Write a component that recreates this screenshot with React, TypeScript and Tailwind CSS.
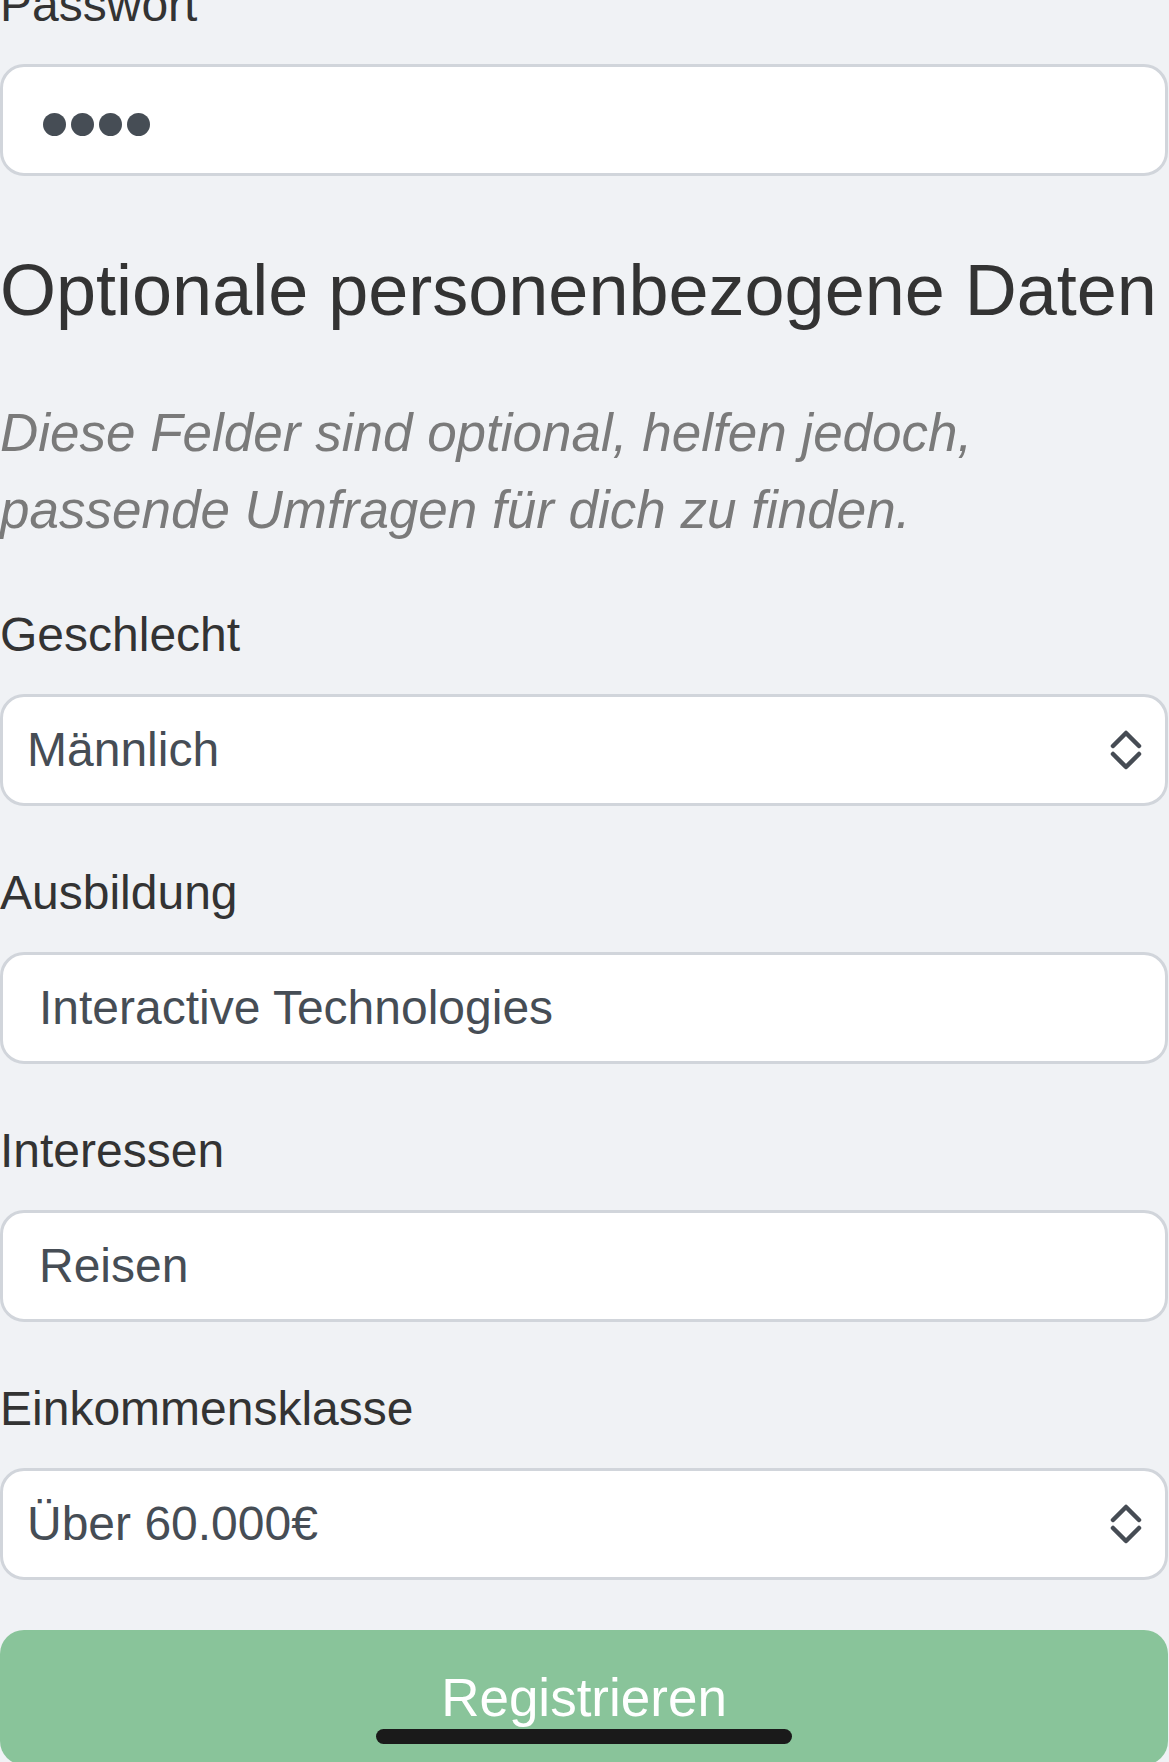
import React from "react";

const font = { fontFamily: '"Liberation Sans", Arial, Helvetica, sans-serif' };

const Chevrons = () => (
  <svg width="34" height="40" viewBox="0 0 34 40" fill="none" stroke="#464c54" strokeWidth={4.5} strokeLinecap="round" strokeLinejoin="round">
    <path d="M4 16 17 3l13 13" />
    <path d="M4 24l13 13 13-13" />
  </svg>
);

const Label = ({ children }: { children: React.ReactNode }) => (
  <p className="text-[48px] leading-[72px] text-[#333333] mb-[23px]">{children}</p>
);

const TextField = ({ value }: { value: string }) => (
  <div className="h-[112px] bg-white border-[3px] border-[#d1d5db] rounded-[24px] flex items-center pl-[36px] text-[48px] text-[#464d55]">
    {value}
  </div>
);

const SelectField = ({ value }: { value: string }) => (
  <div className="h-[112px] bg-white border-[3px] border-[#d1d5db] rounded-[24px] flex items-center justify-between pl-[24px] pr-[22px] text-[48px] text-[#464d55]">
    <span>{value}</span>
    <Chevrons />
  </div>
);

export default function App() {
  return (
    <div className="min-h-screen bg-[#f0f2f5] overflow-hidden" style={font}>
      <div className="w-[1168px] -mt-[31px]">
        <Label>Passwort</Label>
        <div className="h-[112px] bg-white border-[3px] border-[#d1d5db] rounded-[24px] flex items-center pl-[40px] pt-[9px] gap-[5px]">
          <span className="w-[23px] h-[23px] rounded-full bg-[#464d55]" />
          <span className="w-[23px] h-[23px] rounded-full bg-[#464d55]" />
          <span className="w-[23px] h-[23px] rounded-full bg-[#464d55]" />
          <span className="w-[23px] h-[23px] rounded-full bg-[#464d55]" />
        </div>

        <h2 className="mt-[60px] text-[72px] leading-[108px] text-[#333333] whitespace-nowrap">
          Optionale personenbezogene Daten
        </h2>
        <p className="mt-[50px] text-[53px] leading-[77px] italic text-[#7a7a7a]">
          Diese Felder sind optional, helfen jedoch,
          <br />
          passende Umfragen für dich zu finden.
        </p>

        <div className="mt-[51px] flex flex-col gap-[51px]">
          <div>
            <Label>Geschlecht</Label>
            <SelectField value="Männlich" />
          </div>
          <div>
            <Label>Ausbildung</Label>
            <TextField value="Interactive Technologies" />
          </div>
          <div>
            <Label>Interessen</Label>
            <TextField value="Reisen" />
          </div>
          <div>
            <Label>Einkommensklasse</Label>
            <SelectField value="Über 60.000€" />
          </div>
        </div>

        <button className="mt-[50px] w-full rounded-[24px] bg-[#89c49a] py-[27px] text-[53px] leading-[81px] text-white">
          Registrieren
        </button>
      </div>

      <div className="fixed bottom-[18px] left-[376px] w-[416px] h-[15px] rounded-full bg-[#1a1a1a]" />
    </div>
  );
}
